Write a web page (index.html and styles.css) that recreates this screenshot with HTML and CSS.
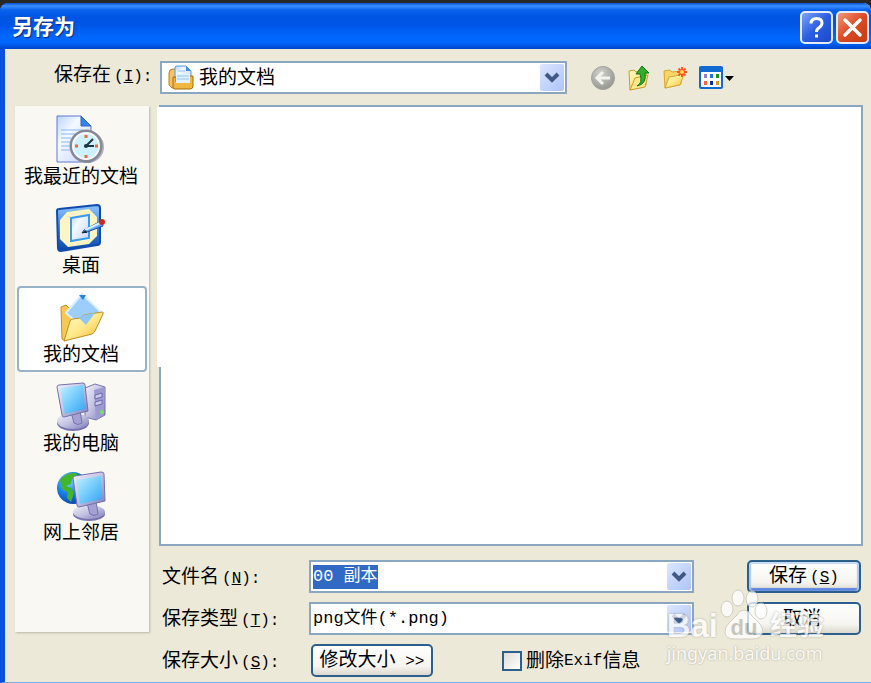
FILE: index.html
```html
<!DOCTYPE html>
<html lang="zh-CN">
<head>
    <meta charset="UTF-8">
    <meta name="viewport" content="width=device-width, initial-scale=1.0">
    <title>另存为</title>
    <link rel="stylesheet" href="styles.css">
</head>
<body>
    <!-- shared gradients -->
    <svg class="defs" width="0" height="0" aria-hidden="true">
        <defs>
            <linearGradient id="paper" x1="0" y1="0" x2="1" y2="1">
                <stop offset="0" stop-color="#b9d4fb"/><stop offset=".35" stop-color="#f4f9ff"/><stop offset="1" stop-color="#c4d4fa"/>
            </linearGradient>
            <linearGradient id="screen" x1="0" y1="0" x2="1" y2="1">
                <stop offset="0" stop-color="#c5f0ff"/><stop offset=".5" stop-color="#74cdfb"/><stop offset="1" stop-color="#35a1f5"/>
            </linearGradient>
            <linearGradient id="metal" x1="0" y1="0" x2="1" y2="1">
                <stop offset="0" stop-color="#f1f1fa"/><stop offset=".5" stop-color="#c3c2e2"/><stop offset="1" stop-color="#7c79b6"/>
            </linearGradient>
            <linearGradient id="gold" x1="0" y1="0" x2="1" y2="1">
                <stop offset="0" stop-color="#fffac8"/><stop offset=".5" stop-color="#ffe98a"/><stop offset="1" stop-color="#efb62f"/>
            </linearGradient>
            <linearGradient id="desk" x1="0" y1="0" x2="0" y2="1">
                <stop offset="0" stop-color="#8ec4fa"/><stop offset=".5" stop-color="#3d86e2"/><stop offset="1" stop-color="#0745a8"/>
            </linearGradient>
            <radialGradient id="globe" cx=".35" cy=".3" r=".8">
                <stop offset="0" stop-color="#8cdcff"/><stop offset=".45" stop-color="#1785e8"/><stop offset="1" stop-color="#0a3ba4"/>
            </radialGradient>
            <radialGradient id="grey" cx=".4" cy=".3" r=".8">
                <stop offset="0" stop-color="#d2d2cd"/><stop offset="1" stop-color="#8f8f8a"/>
            </radialGradient>
        </defs>
    </svg>

    <div class="dialog">
        <header class="titlebar">
            <h1>另存为</h1>
            <button class="caption-btn help" type="button" aria-label="帮助">
                <svg width="29" height="29" viewBox="0 0 29 29"><path d="M9 10.500Q9 5.500 14.500 5.500T20 10q0 2.500-2.800 4.500Q14.500 16.300 14.500 19" fill="none" stroke="#fff" stroke-width="3"/><rect x="13" y="21.500" width="3" height="3" fill="#fff"/></svg>
            </button>
            <button class="caption-btn close" type="button" aria-label="关闭">
                <svg width="29" height="29" viewBox="0 0 29 29"><path d="M7 7l15 15M22 7L7 22" stroke="#fff" stroke-width="3.500" stroke-linecap="round"/></svg>
            </button>
        </header>

        <div class="lookin">
            <label for="folder">保存在<span class="latin key">(<u>I</u>):</span></label>
            <div class="combo">
                <svg class="combo-icon" width="26" height="26" viewBox="0 0 26 26">
                    <path d="M1 8q0-4 4-4h4v19H4l-3-3z" fill="#f6c35c" stroke="#b8821f"/>
                    <path d="M7 14V3q0-2 2-2h9l5 5v10H7z" fill="url(#paper)" stroke="#4c9ce8"/>
                    <path d="M18 1v5h5z" fill="#3f8fe6"/>
                    <path d="M5 12h3v5h13v-6h4v10q0 3-3 3H7q-2 0-2-2z" fill="#f0b742" stroke="#a96d0a"/>
                    <path d="M8 9h14v9H8z" fill="#e3f1ff"/>
                    <path d="M10 6h7M9 11h12M9 14h12" stroke="#8dc3f7"/>
                </svg>
                <select id="folder" class="has-icon"><option>我的文档</option></select>
            </div>
            <div class="tools">
                <button type="button" aria-label="后退">
                    <svg width="26" height="26" viewBox="0 0 26 26"><circle cx="12" cy="13" r="11.500" fill="url(#grey)" stroke="#a2a29c"/><path d="M19 13H7M12 7l-6 6 6 6" fill="none" stroke="#f3f3ee" stroke-width="3"/></svg>
                </button>
                <button type="button" aria-label="向上一级">
                    <svg width="26" height="26" viewBox="0 0 26 26">
                        <path d="M2 6l5-1 2 2 10-1v14L3 25z" fill="url(#gold)" stroke="#cf9b20"/>
                        <path d="M3 25l5-12 5-1 8-2-3 12z" fill="#ffe98e" stroke="#cf9b20"/>
                        <path d="M10 21q6-3 3-12h-4l6-8 7 7h-4q2 11-8 13z" fill="#35ad2c" stroke="#10761a"/>
                    </svg>
                </button>
                <button type="button" aria-label="新建文件夹">
                    <svg width="26" height="26" viewBox="0 0 26 26">
                        <path d="M1 6l6-1 2 2 9-1v13L2 23z" fill="#f7d568" stroke="#d5a632"/>
                        <path d="M2 23l4-11 6-1 9-2-4 11z" fill="url(#gold)" stroke="#d5a632"/>
                        <path d="M19 2v10M14 7h10M15.500 3.500l7 7M22.500 3.500l-7 7" stroke="#fb5826" stroke-width="2"/><circle cx="19" cy="7" r="2" fill="#ffd44e"/>
                    </svg>
                </button>
                <button type="button" aria-label="查看菜单">
                    <svg width="36" height="26" viewBox="0 0 36 26">
                        <rect x="1" y="2" width="22" height="21" rx="1" fill="#fff" stroke="#126bd0" stroke-width="2"/>
                        <path d="M0 2h24v5H0z" fill="#126bd0"/>
                        <path d="M5 9h3v4H5z" fill="#8c84c4"/><path d="M11 9h3v4h-3z" fill="#1b78e4"/><path d="M17 9h3v4h-3z" fill="#149425"/>
                        <path d="M5 16h3v4H5z" fill="#f4633a"/><path d="M11 16h3v4h-3z" fill="#092f9c"/><path d="M17 16h3v4h-3z" fill="#cf9a28"/>
                        <path d="M26 11h9l-4.500 5z" fill="#000"/>
                    </svg>
                </button>
            </div>
        </div>

        <div class="content">
            <nav class="places">
                <button class="place" type="button">
                    <svg width="50" height="50" viewBox="0 0 50 50">
                        <path d="M1 1h24l10 10v36H1z" fill="url(#paper)" stroke="#6577d2"/>
                        <path d="M25 1v10h10z" fill="#3484e2" stroke="#3167be"/>
                        <path d="M5 15h22M5 19h18M5 23h10M5 27h9M5 31h9M5 35h9" stroke="#88b6f2"/>
                        <circle cx="32" cy="32" r="16" fill="#666b85" opacity=".5"/>
                        <circle cx="30" cy="31" r="15" fill="#d9edfa" stroke="#858997" stroke-width="3"/>
                        <circle cx="30" cy="31" r="13" fill="#cdf1fe" stroke="#f5f8fb" stroke-width="2"/>
                        <path d="M30 20v3M30 40v3M19 31h3M39 31h3" stroke="#f06a35" stroke-width="3"/>
                        <path d="M37 24l-7 7h8" fill="none" stroke="#223447" stroke-width="2"/><circle cx="30" cy="31" r="2" fill="#223447"/>
                    </svg>
                    <span>我最近的文档</span>
                </button>
                <button class="place" type="button">
                    <svg width="50" height="50" viewBox="0 0 50 50">
                        <path d="M1 7q0-2 2-2L41 1q3 0 3 3v34q0 3-3 3L5 47q-3 0-3-3z" fill="url(#desk)" stroke="#104cae" stroke-width="2"/>
                        <path d="M11 8l22-3 8 8v19l-8 8-21 3-8-8V16z" fill="#fff5c4"/>
                        <path d="M15 14l18-3v23l-18 3z" fill="url(#paper)" stroke="#3699ef" stroke-width="2"/>
                        <path d="M28 26l17-9 2 5-16 6-5 1z" fill="#60acf2" stroke="#174b94"/>
                        <path d="M29 26l15-7" stroke="#d9efff" stroke-width="2"/>
                        <circle cx="46" cy="18" r="3" fill="#c92b18"/><path d="M26 29l4-3 1 3z" fill="#222"/>
                    </svg>
                    <span>桌面</span>
                </button>
                <button class="place selected" type="button">
                    <svg width="50" height="50" viewBox="0 0 50 50">
                        <path d="M5 14l5-2 4 4 4 6-9 26-3-2z" fill="#f5c954" stroke="#c28d22"/>
                        <path d="M26 1l18 17-14 19L10 20z" fill="#9ccdfb" stroke="#dceeff" stroke-width="2"/>
                        <path d="M23 2h7l-3 5z" fill="#2782dc"/>
                        <path d="M8 48l6-20q1-2 3-2l7-1 4-3 18-3q2 0 1 2l-8 17q-1 2-3 3z" fill="url(#gold)" stroke="#c28d22"/>
                        <path d="M23 25l5-3 11-2-9 12z" fill="#8ec7f5"/>
                    </svg>
                    <span>我的文档</span>
                </button>
                <button class="place" type="button">
                    <svg width="50" height="50" viewBox="0 0 50 50">
                        <path d="M29 6l10-4 10 3v28l-9 5-11-3z" fill="url(#metal)" stroke="#7775b4"/>
                        <path d="M38 8l10-3v28l-8 5z" fill="#9d9acf"/>
                        <path d="M39 13l7-2v4l-7 2zM39 20l7-2v4l-7 2z" fill="#c9c8ea" stroke="#6b68aa"/><circle cx="46" cy="30" r="2" fill="#72e84c"/>
                        <ellipse cx="17" cy="41" rx="16" ry="8" fill="#7673b0"/><ellipse cx="17" cy="39" rx="16" ry="8" fill="url(#metal)"/>
                        <path d="M15 30l9-2 2 13q-4 3-8 0z" fill="#a5a2d3" stroke="#7371ad"/>
                        <path d="M1 5q0-2 2-2l24-2q2 0 2 2l3 26-24 6q-2 0-2-2z" fill="url(#metal)" stroke="#7371ad"/>
                        <path d="M4 6l23-3 2 24-20 5z" fill="url(#screen)"/>
                    </svg>
                    <span>我的电脑</span>
                </button>
                <button class="place" type="button">
                    <svg width="50" height="50" viewBox="0 0 50 50">
                        <circle cx="17" cy="17" r="16" fill="url(#globe)"/>
                        <path d="M4 9q6-8 16-7l2 3-6 3-1 5-5 2 5 2 3 5-3 9-4-4 1-6-6-3z" fill="#43b52a"/>
                        <ellipse cx="33" cy="43" rx="16" ry="7" fill="#7673b0"/><ellipse cx="33" cy="41" rx="16" ry="7" fill="url(#metal)"/>
                        <path d="M31 32l9-2 2 13q-4 3-8 0z" fill="#a5a2d3" stroke="#7371ad"/>
                        <path d="M17 7q0-2 2-2l26-4q3 0 3 2l1 27-26 6q-2 0-2-2z" fill="url(#metal)" stroke="#7371ad"/>
                        <path d="M20 9l25-4 1 23-22 5z" fill="url(#screen)"/>
                    </svg>
                    <span>网上邻居</span>
                </button>
            </nav>

            <main>
                <div class="filelist"></div>
                <form class="fields">
                    <label for="filename">文件名<span class="latin key">(<u>N</u>):</span></label>
                    <div class="combo">
                        <input id="filename" type="text" value="00 副本" autocomplete="off" autofocus>
                        <button class="drop" type="button" aria-label="展开"></button>
                    </div>
                    <button class="btn default" type="button">保存<span class="latin key">(<u>S</u>)</span></button>

                    <label for="filetype">保存类型<span class="latin key">(<u>T</u>):</span></label>
                    <div class="combo">
                        <select id="filetype"><option>png文件(*.png)</option></select>
                    </div>
                    <button class="btn cancel" type="button">取消</button>

                    <label for="resize">保存大小<span class="latin key">(<u>S</u>):</span></label>
                    <div class="size-row">
                        <button id="resize" class="btn" type="button">修改大小<span class="latin"> &gt;&gt;</span></button>
                        <label class="check"><input type="checkbox">删除<span class="latin">Exif</span>信息</label>
                    </div>
                </form>
            </main>
        </div>

        <div class="watermark">
            <div class="brand">
                <span>Bai</span>
                <svg width="48" height="52" viewBox="0 0 48 52">
                    <ellipse cx="7" cy="20" rx="6" ry="8"/><ellipse cx="18" cy="9" rx="6" ry="8"/>
                    <ellipse cx="32" cy="10" rx="6" ry="8"/><ellipse cx="41" cy="22" rx="6" ry="8"/>
                    <path d="M24 21q5 0 8 6l8 8q4 5 2 10-2 5-9 5H14q-8 0-9-6-1-5 4-10l7-7q3-6 8-6z"/>
                    <text x="24" y="46" text-anchor="middle">du</text>
                </svg>
                <span class="cn">经验</span>
            </div>
            <div class="site">jingyan.baidu.com</div>
        </div>
    </div>

    <script>
        const filename = document.getElementById('filename');
        filename.focus();
        filename.select();
    </script>
</body>
</html>
```
FILE: styles.css
```css
* {
    box-sizing: border-box;
}

body {
    margin: 0;
    padding-top: 3px;
    background: #272725;
    font-family: "Liberation Sans", "Noto Sans CJK SC", sans-serif;
    font-size: 19px;
    line-height: 24px;
    color: #000;
}

button, input, select {
    font: inherit;
    color: inherit;
    margin: 0;
}

button {
    padding: 0;
    border: none;
    background: none;
}

svg {
    display: block;
}

.defs {
    position: absolute;
}

.latin {
    font-family: "Liberation Mono", monospace;
    font-size: 16px;
    white-space: pre;
}

.key {
    margin-left: 3px;
}

.dialog {
    position: relative;
    background: #ece9d8;
    border-left: 5px solid #0a50e0;
    border-bottom: 1px solid #7fa8e8;
    border-radius: 8px 8px 0 0;
}

/* title bar */
.titlebar {
    display: flex;
    align-items: center;
    gap: 3px;
    height: 46px;
    margin-left: -5px;
    padding: 2px 2px 0 12px;
    border-radius: 8px 8px 0 0;
    background: linear-gradient(#0a4fd0 0, #3b91ff 3px, #0a62ee 7px, #0054e3 14px, #0055e6 22px, #0068ff 34px, #0066fc 40px, #0044c8 46px);
}

.titlebar h1 {
    flex: 1;
    margin: 0;
    font-size: 21px;
    font-weight: bold;
    color: #fff;
    text-shadow: 1px 1px 1px #0a2a80;
}

.caption-btn {
    width: 33px;
    height: 33px;
    border: 2px solid #e6ecff;
    border-radius: 5px;
}

.help {
    background: linear-gradient(135deg, #7ea2f5, #2a5fe3 50%, #1c48cb);
}

.close {
    background: linear-gradient(135deg, #f0987c, #dd4a24 50%, #c33b13);
}

/* folder row */
.lookin {
    display: flex;
    align-items: center;
    height: 56px;
    padding: 1px 136px 0 49px;
}

.lookin label {
    width: 106px;
    padding-bottom: 3px;
}

.lookin .combo {
    flex: 1;
}

.tools {
    display: flex;
    gap: 10px;
    margin-left: 24px;
}

.combo {
    position: relative;
    display: flex;
    height: 33px;
    border: 2px solid #8aa6c0;
    background: #fff;
}

.combo-icon {
    position: absolute;
    left: 6px;
    top: 2px;
    pointer-events: none;
}

.combo select,
.combo input {
    flex: 1;
    min-width: 0;
    padding: 1px 30px 0 2px;
    border: none;
    outline: none;
    border-radius: 0;
    background: transparent;
    font-family: "Liberation Mono", "Noto Sans CJK SC", monospace;
    font-size: 17px;
}

.combo select,
.drop {
    appearance: none;
    background-color: #fff;
    background-image: url("data:image/svg+xml,%3Csvg xmlns='http://www.w3.org/2000/svg' width='24' height='27' viewBox='0 0 24 27'%3E%3ClinearGradient id='g' x2='1' y2='1'%3E%3Cstop stop-color='%23dbe6ff'/%3E%3Cstop offset='1' stop-color='%23aec4f8'/%3E%3C/linearGradient%3E%3Crect width='24' height='27' rx='2' fill='url(%23g)'/%3E%3Cpath d='M6 10l6 6 6-6' fill='none' stroke='%23415a85' stroke-width='4'/%3E%3C/svg%3E");
    background-repeat: no-repeat;
    background-position: right 1px center;
}

.combo select.has-icon {
    padding: 3px 30px 0 37px;
    font-size: 19px;
}

.combo input {
    padding-right: 3px;
}

.drop {
    width: 26px;
}

input::selection {
    background: #316ac5;
    color: #fff;
}

/* places bar and file list */
.content {
    display: grid;
    grid-template-columns: 134px 1fr;
    align-items: start;
    gap: 10px;
    padding: 0 8px 5px 10px;
}

.places {
    display: flex;
    flex-direction: column;
    gap: 3px;
    min-height: 526px;
    margin-top: 1px;
    padding: 2px;
    background: #f9f8f3;
    box-shadow: 1px 1px 2px #b9b6a6;
}

.place {
    display: flex;
    flex-direction: column;
    align-items: center;
    height: 86px;
    padding: 5px 2px 0 0;
    border: 2px solid transparent;
    border-radius: 4px;
    white-space: nowrap;
}

.place.selected {
    border-color: #98b2c8;
    background: #fff;
}

.filelist {
    position: relative;
    height: 441px;
    border: 2px solid #8aa6c0;
    background: #fff;
}

/* blank sheet lying over the upper left edge */
.filelist::before {
    content: "";
    position: absolute;
    left: -4px;
    top: 0;
    width: 160px;
    height: 260px;
    background: #fff;
}

/* file name, type and size */
.fields {
    display: grid;
    grid-template-columns: 149px 1fr 114px;
    grid-auto-rows: 33px;
    gap: 9px 0;
    align-items: center;
    padding: 14px 2px 0 3px;
}

.fields > label {
    padding-top: 2px;
}

.fields .combo {
    margin-right: 53px;
    margin-left: -2px;
}

.btn {
    height: 33px;
    border: 2px solid #2c5f8c;
    border-radius: 5px;
    background: linear-gradient(#fff, #f5f4ef 70%, #dcd8cc);
}

.btn.default {
    box-shadow: inset 0 2px 1px #c4dafa, inset 2px 0 1px #a9c6f5, inset -2px 0 1px #a9c6f5, inset 0 -3px 1px #5d85dd;
}

.btn.cancel {
    padding-right: 4px;
}

.size-row {
    grid-column: 2 / 4;
    display: flex;
    align-items: center;
    gap: 69px;
}

.size-row .btn {
    width: 122px;
}

.check {
    display: flex;
    align-items: center;
    white-space: nowrap;
}

.check input {
    appearance: none;
    width: 20px;
    height: 20px;
    margin-right: 4px;
    border: 2px solid #2c5f8c;
    background: linear-gradient(135deg, #dcdcd7, #fff);
}

/* watermark over the lower right corner */
.watermark {
    position: absolute;
    right: 47px;
    bottom: 17px;
    color: #fff;
    opacity: .75;
    pointer-events: none;
    text-shadow: 0 0 2px #8d8a7e;
}

.brand {
    display: flex;
    align-items: flex-end;
    font-size: 33px;
    font-weight: bold;
    line-height: 30px;
}

.brand svg {
    margin: 0 2px;
    fill: #fff;
    stroke: #c8c5b8;
}

.brand text {
    fill: #bdbbb0;
    stroke: none;
    font-size: 22px;
    text-shadow: none;
}

.brand .cn {
    font-size: 27px;
}

.site {
    font-family: "Noto Sans", sans-serif;
    font-size: 18px;
}
```
